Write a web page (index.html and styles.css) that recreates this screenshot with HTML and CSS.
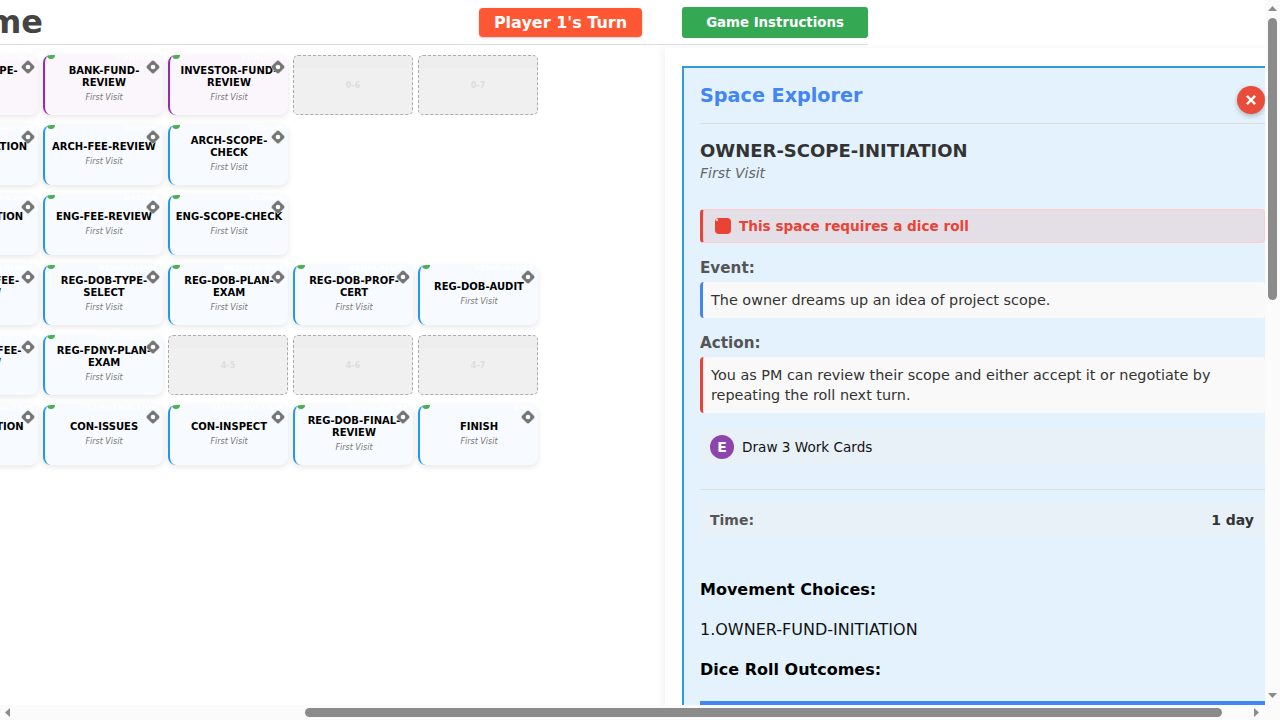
FILE: index.html
```html
<!DOCTYPE html>
<html lang="en">
<head>
<meta charset="utf-8">
<title>Project Game</title>
<link rel="stylesheet" href="styles.css">
</head>
<body>
<div class="screen">
<div class="viewport">
<div class="page">
  <header class="topbar">
    <h1 class="game-title">Project Game</h1>
    <button class="turn-btn">Player 1's Turn</button>
    <button class="help-btn">Game Instructions</button>
  </header>
  <div class="layout">
    <main class="board">
      <div class="grid">
        <div class="card funding"><i class="dot"></i><span class="kind">FUNDING</span><svg class="mark" viewBox="0 0 16 16"><use href="#mark"/></svg><div class="name">FUND-SCOPE-CHECK</div><div class="visit">First Visit</div></div>
        <div class="card funding"><i class="dot"></i><span class="kind">FUNDING</span><svg class="mark" viewBox="0 0 16 16"><use href="#mark"/></svg><div class="name">BANK-FUND-REVIEW</div><div class="visit">First Visit</div></div>
        <div class="card funding"><i class="dot"></i><span class="kind">FUNDING</span><svg class="mark" viewBox="0 0 16 16"><use href="#mark"/></svg><div class="name">INVESTOR-FUND-REVIEW</div><div class="visit">First Visit</div></div>
        <div class="empty">0-6</div>
        <div class="empty">0-7</div>

        <div class="card"><i class="dot"></i><span class="kind">DESIGN</span><svg class="mark" viewBox="0 0 16 16"><use href="#mark"/></svg><div class="name">ARCH-INITIATION</div><div class="visit">First Visit</div></div>
        <div class="card"><i class="dot"></i><span class="kind">DESIGN</span><svg class="mark" viewBox="0 0 16 16"><use href="#mark"/></svg><div class="name">ARCH-FEE-REVIEW</div><div class="visit">First Visit</div></div>
        <div class="card"><i class="dot"></i><span class="kind">DESIGN</span><svg class="mark" viewBox="0 0 16 16"><use href="#mark"/></svg><div class="name">ARCH-SCOPE-CHECK</div><div class="visit">First Visit</div></div>
        <div class="gap"></div>
        <div class="gap"></div>

        <div class="card"><i class="dot"></i><span class="kind">DESIGN</span><svg class="mark" viewBox="0 0 16 16"><use href="#mark"/></svg><div class="name">ENG-INITIATION</div><div class="visit">First Visit</div></div>
        <div class="card"><i class="dot"></i><span class="kind">DESIGN</span><svg class="mark" viewBox="0 0 16 16"><use href="#mark"/></svg><div class="name">ENG-FEE-REVIEW</div><div class="visit">First Visit</div></div>
        <div class="card"><i class="dot"></i><span class="kind">DESIGN</span><svg class="mark" viewBox="0 0 16 16"><use href="#mark"/></svg><div class="name">ENG-SCOPE-CHECK</div><div class="visit">First Visit</div></div>
        <div class="gap"></div>
        <div class="gap"></div>

        <div class="card"><i class="dot"></i><span class="kind">REGULATORY</span><svg class="mark" viewBox="0 0 16 16"><use href="#mark"/></svg><div class="name">REG-DOB-FEE-REVIEW</div><div class="visit">First Visit</div></div>
        <div class="card"><i class="dot"></i><span class="kind">REGULATORY</span><svg class="mark" viewBox="0 0 16 16"><use href="#mark"/></svg><div class="name">REG-DOB-TYPE-SELECT</div><div class="visit">First Visit</div></div>
        <div class="card"><i class="dot"></i><span class="kind">REGULATORY</span><svg class="mark" viewBox="0 0 16 16"><use href="#mark"/></svg><div class="name">REG-DOB-PLAN-EXAM</div><div class="visit">First Visit</div></div>
        <div class="card"><i class="dot"></i><span class="kind">REGULATORY</span><svg class="mark" viewBox="0 0 16 16"><use href="#mark"/></svg><div class="name">REG-DOB-PROF-CERT</div><div class="visit">First Visit</div></div>
        <div class="card"><i class="dot"></i><span class="kind">REGULATORY</span><svg class="mark" viewBox="0 0 16 16"><use href="#mark"/></svg><div class="name">REG-DOB-AUDIT</div><div class="visit">First Visit</div></div>

        <div class="card"><i class="dot"></i><span class="kind">REGULATORY</span><svg class="mark" viewBox="0 0 16 16"><use href="#mark"/></svg><div class="name">REG-FDNY-FEE-REVIEW</div><div class="visit">First Visit</div></div>
        <div class="card"><i class="dot"></i><span class="kind">REGULATORY</span><svg class="mark" viewBox="0 0 16 16"><use href="#mark"/></svg><div class="name">REG-FDNY-PLAN-EXAM</div><div class="visit">First Visit</div></div>
        <div class="empty">4-5</div>
        <div class="empty">4-6</div>
        <div class="empty">4-7</div>

        <div class="card"><i class="dot"></i><span class="kind">CONSTRUCTION</span><svg class="mark" viewBox="0 0 16 16"><use href="#mark"/></svg><div class="name">CON-INITIATION</div><div class="visit">First Visit</div></div>
        <div class="card"><i class="dot"></i><span class="kind">CONSTRUCTION</span><svg class="mark" viewBox="0 0 16 16"><use href="#mark"/></svg><div class="name">CON-ISSUES</div><div class="visit">First Visit</div></div>
        <div class="card"><i class="dot"></i><span class="kind">CONSTRUCTION</span><svg class="mark" viewBox="0 0 16 16"><use href="#mark"/></svg><div class="name">CON-INSPECT</div><div class="visit">First Visit</div></div>
        <div class="card"><i class="dot"></i><span class="kind">REGULATORY</span><svg class="mark" viewBox="0 0 16 16"><use href="#mark"/></svg><div class="name">REG-DOB-FINAL-REVIEW</div><div class="visit">First Visit</div></div>
        <div class="card"><i class="dot"></i><span class="kind">END</span><svg class="mark" viewBox="0 0 16 16"><use href="#mark"/></svg><div class="name">FINISH</div><div class="visit">First Visit</div></div>
      </div>
    </main>
    <aside class="side">
      <section class="explorer">
        <div class="explorer-head">
          <h2 class="explorer-title">Space Explorer</h2>
          <button class="close-btn" aria-label="Close"><svg viewBox="0 0 12 12"><path d="M2.5 2.5 L9.5 9.5 M9.5 2.5 L2.5 9.5"/></svg></button>
        </div>
        <h3 class="space-name">OWNER-SCOPE-INITIATION</h3>
        <div class="space-visit">First Visit</div>
        <div class="dice-alert"><span class="die"></span>This space requires a dice roll</div>
        <div class="field-label">Event:</div>
        <div class="field-box event">The owner dreams up an idea of project scope.</div>
        <div class="field-label">Action:</div>
        <div class="field-box action">You as PM can review their scope and either accept it or negotiate by repeating the roll next turn.</div>
        <div class="cards-row"><span class="card-type">E</span>Draw 3 Work Cards</div>
        <hr class="rule">
        <div class="time-row"><span class="time-label">Time:</span><span class="time-value">1 day</span></div>
        <h4 class="sub-title first">Movement Choices:</h4>
        <div class="choice">1.OWNER-FUND-INITIATION</div>
        <h4 class="sub-title">Dice Roll Outcomes:</h4>
        <div class="dice-head"></div>
      </section>
    </aside>
  </div>
</div>
</div>
<div class="vbar"><i class="arrow up"></i><b class="vthumb"></b><i class="arrow down"></i></div>
<div class="hbar"><i class="arrow left"></i><b class="hthumb"></b><i class="arrow right"></i></div>
</div>
<svg class="defs" width="0" height="0"><defs><g id="mark"><rect x="2.8" y="2.8" width="10.4" height="10.4" rx="1.6" transform="rotate(45 8 8)" fill="#757575" stroke="#fff" stroke-opacity=".5" stroke-width=".8"/><circle cx="8" cy="8" r="2.3" fill="#fff"/></g></defs></svg>
</body>
</html>
```
FILE: styles.css
```css
* { box-sizing: border-box; }
html, body { margin: 0; padding: 0; background: #fff; overflow: hidden; }
body { font-family: "DejaVu Sans", sans-serif; color: #000; }
.defs { position: absolute; }

.screen { position: relative; width: 1280px; height: 720px; overflow: hidden; background: #fbfbfb; }
.viewport { width: 1265px; height: 705px; overflow: hidden; background: #fff; }
.page { width: 1703px; margin-left: -400px; }

.vbar { position: absolute; top: 0; right: 0; bottom: 0; width: 15px; display: flex; flex-direction: column; align-items: center; background: #fbfbfb; }
.hbar { position: absolute; left: 0; right: 15px; bottom: 0; height: 15px; display: flex; align-items: center; background: #fbfbfb; }
.vthumb { position: absolute; top: 18px; left: 3px; width: 9px; height: 282px; border-radius: 5px; background: #8b8b8b; }
.hthumb { position: absolute; top: 3px; left: 305px; width: 917px; height: 9px; border-radius: 5px; background: #8b8b8b; }
.arrow { position: absolute; background: #8b8b8b; }
.arrow.up { top: 6px; left: 3px; width: 9px; height: 5px; clip-path: polygon(50% 0, 100% 100%, 0 100%); }
.arrow.down { bottom: 22px; left: 3px; width: 9px; height: 5px; clip-path: polygon(0 0, 100% 0, 50% 100%); }
.arrow.left { left: 5px; top: 3px; width: 5px; height: 9px; clip-path: polygon(100% 0, 100% 100%, 0 50%); }
.arrow.right { left: 1254px; top: 3px; width: 5px; height: 9px; clip-path: polygon(0 0, 100% 50%, 0 100%); }

.topbar { width: 1268px; height: 45px; display: flex; align-items: center; border-bottom: 1px solid #ddd; }
.game-title { flex: 0 0 443px; margin: 0; padding-bottom: 1px; text-align: right; white-space: nowrap; overflow: hidden; font-size: 32px; line-height: 40px; font-weight: 700; color: #444; }
.turn-btn { margin-left: auto; width: 163px; height: 29px; border: 0; border-radius: 4px; background: #ff5733; color: #fff; font: 700 16px "DejaVu Sans", sans-serif; box-shadow: 0 1px 3px rgba(0,0,0,.2); padding: 0; }
.help-btn { margin-left: 40px; width: 186px; height: 31px; border: 0; border-radius: 3px; background: #34a853; color: #fff; font: 700 13.33px "DejaVu Sans", sans-serif; padding: 0; }

.layout { display: flex; align-items: stretch; }
.board { flex: 0 0 1065px; padding: 10px 0 0 318px; }
.grid { display: grid; grid-template-columns: repeat(5, 120px); grid-auto-rows: 60px; column-gap: 5px; row-gap: 10px; }

.card { position: relative; overflow: hidden; display: flex; flex-direction: column; align-items: center; justify-content: center; padding: 0 3px 2px; border-left: 2px solid #2196f3; border-radius: 8px; background: #f7fbff; box-shadow: 0 2px 6px rgba(0,0,0,.1); text-align: center; }
.card.funding { border-left-color: #9c27b0; background: #fbf6fc; }
.dot { position: absolute; top: -4px; left: 2px; width: 8px; height: 8px; border-radius: 50%; background: #4caf50; }
.kind { position: absolute; top: -2px; right: 5px; font-size: 8px; line-height: 10px; font-weight: 700; color: rgba(255,255,255,.9); white-space: nowrap; }
.mark { position: absolute; top: 4px; right: 2px; width: 16px; height: 16px; }
.name { font-size: 10px; line-height: 12px; font-weight: 700; color: #000; }
.visit { margin-top: 3px; font-size: 8px; line-height: 12px; font-style: italic; color: #777; }
.empty { display: flex; align-items: center; justify-content: center; border: 1px dashed #aaa; border-radius: 5px; background: linear-gradient(#eee 0 12px, #f0f0f0 12px); font-size: 8px; font-weight: 700; color: #ddd; }

.side { flex: 1; padding: 18px 20px 20px 17px; box-shadow: -3px 0 8px rgba(0,0,0,.05); background: #fff; margin-top: 3px; }
.explorer { height: 1600px; padding: 16px; border: 2px solid #3498db; background: #e3f2fd; }
.explorer-head { position: relative; height: 40px; border-bottom: 1px solid #ddd; }
.explorer-title { margin: 0; font-size: 19.2px; line-height: 24px; font-weight: 700; color: #4285f4; }
.close-btn { position: absolute; right: 0; top: 2px; width: 28px; height: 28px; padding: 7px; border: 0; border-radius: 50%; background: #ea4c3c; box-shadow: 0 2px 5px rgba(0,0,0,.25); }
.close-btn svg { display: block; width: 14px; height: 14px; fill: none; stroke: #fff; stroke-width: 2; }
.space-name { margin: 16px 0 0; font-size: 18px; line-height: 22px; font-weight: 700; color: #333; }
.space-visit { font-size: 14px; line-height: 22px; font-style: italic; color: #666; }
.dice-alert { display: flex; align-items: center; height: 34px; margin-top: 25px; padding-left: 12px; border: 1px solid #fcc; border-left: 3px solid #ea4335; border-radius: 4px; background: #e4dfe7; font-size: 13.6px; font-weight: 700; color: #ea4335; }
.die { position: relative; width: 16px; height: 16px; margin-right: 8px; border-radius: 4px; background: #ea4335; }
.die::before { content: ""; position: absolute; top: 1px; left: 1px; width: 2px; height: 2px; border-radius: 1px; background: #fff; }
.field-label { margin-top: 15px; font-size: 15.2px; line-height: 20px; font-weight: 700; color: #555; }
.field-box { margin-top: 4px; padding: 8px; border-left: 3px solid #4285f4; border-radius: 4px; background: #f9f9f9; font-size: 14.4px; line-height: 20px; color: #333; }
.field-box.action { border-left-color: #ea4335; padding-right: 40px; }
.cards-row { display: flex; align-items: center; height: 36px; margin-top: 16px; padding-left: 10px; border-radius: 4px; background: #e9f1f8; font-size: 13.6px; color: #111; }
.card-type { display: flex; align-items: center; justify-content: center; width: 24px; height: 24px; margin-right: 8px; border-radius: 50%; background: #8e44ad; color: #fff; font-weight: 700; font-size: 14px; }
.rule { height: 1px; margin: 24px 0 15px; border: 0; background: #ddd; }
.time-row { display: flex; justify-content: space-between; align-items: center; height: 30px; padding: 0 11px 0 10px; border-radius: 4px; background: #e9f1f8; font-size: 14px; font-weight: 700; }
.time-label { color: #555; }
.time-value { color: #333; }
.sub-title { margin: 0; font-size: 16px; line-height: 20px; font-weight: 700; color: #000; }
.sub-title.first { margin-top: 45px; }
.choice { margin: 20px 0; font-size: 16px; line-height: 20px; color: #111; }
.dice-head { height: 40px; margin-top: 21px; background: #4285f4; }
```
